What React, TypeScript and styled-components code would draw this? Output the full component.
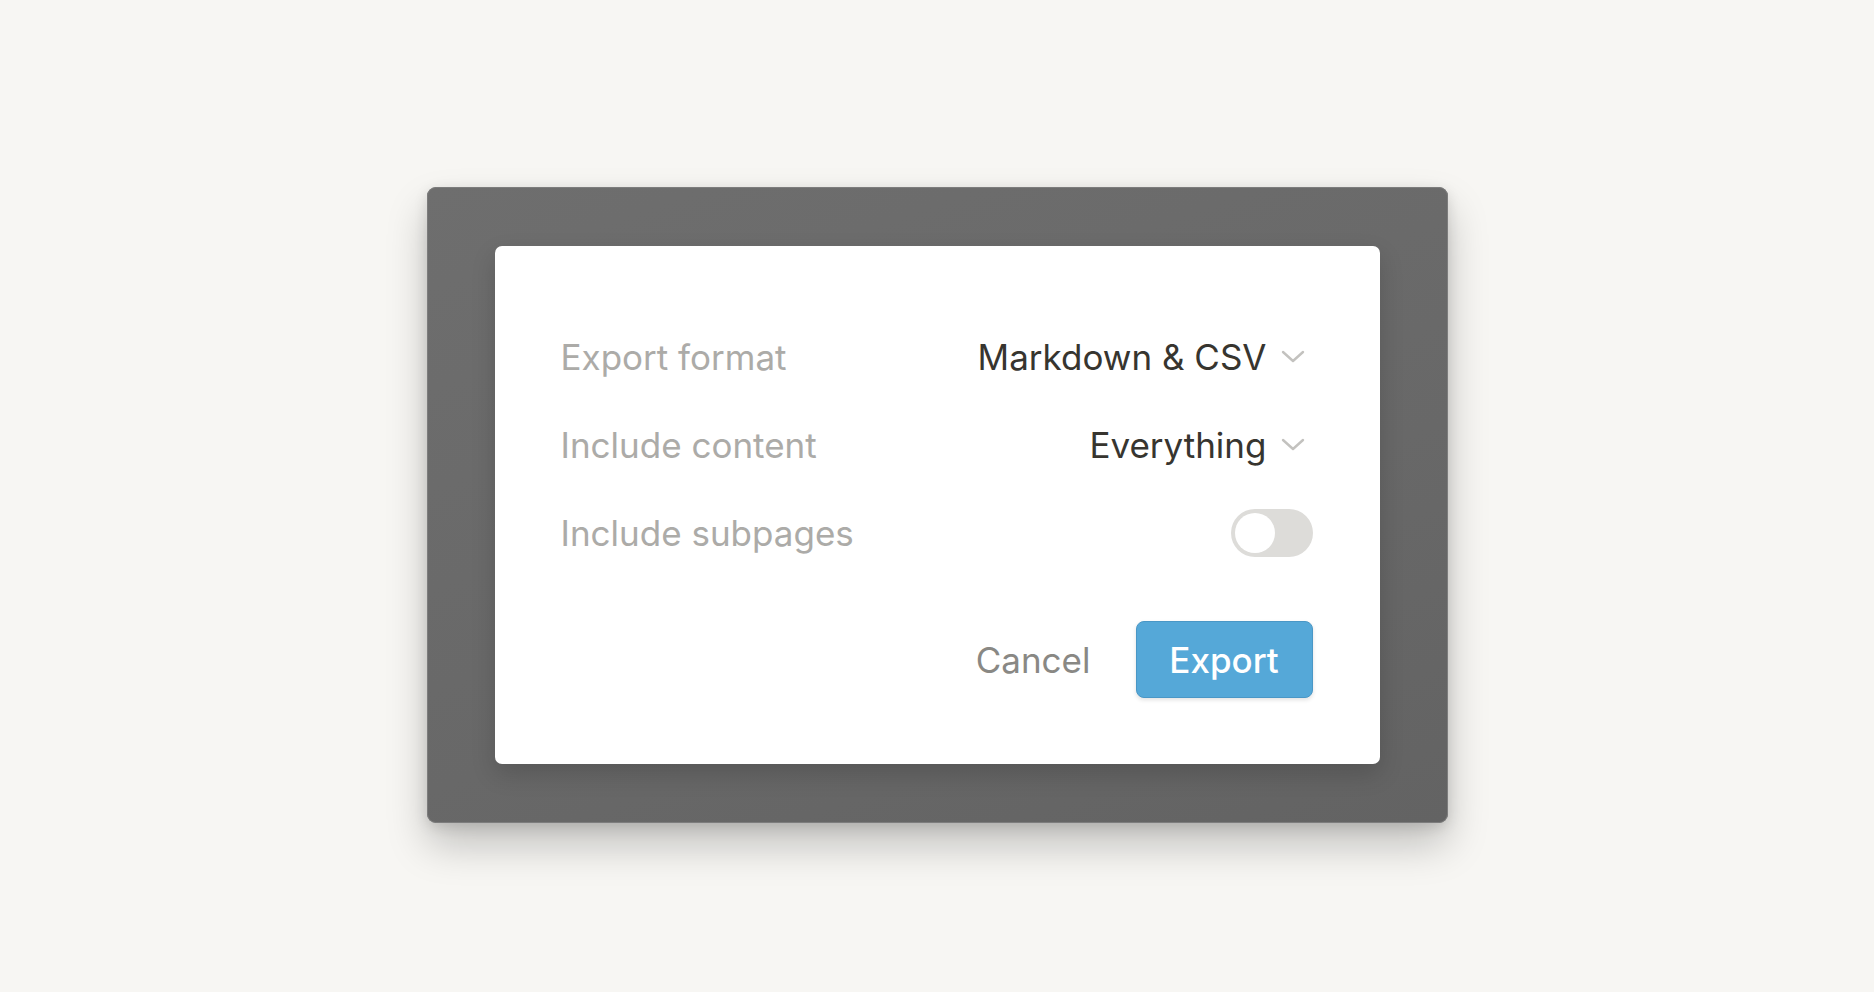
import { useState } from 'react'
import styled, { createGlobalStyle } from 'styled-components'

const GlobalStyle = createGlobalStyle`
  * {
    box-sizing: border-box;
  }
  html, body {
    margin: 0;
    padding: 0;
    background-color: #f7f6f3;
    font-family: Inter, "Liberation Sans", Arial, sans-serif;
  }
`

const Page = styled.div`
  min-height: 100vh;
  padding-top: 18px;
  display: flex;
  justify-content: center;
  align-items: center;
  background-color: #f7f6f3;
`

const Overlay = styled.div`
  padding: 59px 68px;
  border-radius: 9px;
  background: linear-gradient(160deg, #6e6e6e 0%, #686868 60%, #636363 100%);
  box-shadow: inset 0 0 0 1px #7d7d7d, 0 22px 40px rgba(0, 0, 0, 0.22), 0 4px 14px rgba(0, 0, 0, 0.12);
`

const Dialog = styled.div`
  width: 885px;
  padding: 67px 67px 66px 66px;
  border-radius: 7px;
  background-color: white;
  box-shadow: 0 10px 24px rgba(0, 0, 0, 0.16);
  display: flex;
  flex-direction: column;
`

const Row = styled.div`
  height: 88px;
  display: flex;
  justify-content: space-between;
  align-items: center;
`

const Label = styled.span`
  font-size: 35px;
  color: #acaba8;
`

const Select = styled.button`
  display: flex;
  align-items: center;
  gap: 14px;
  padding: 0 8px 0 0;
  border: none;
  background: none;
  cursor: pointer;
  font-family: inherit;
`

const SelectValue = styled.span`
  font-size: 35px;
  color: #37352f;
`

const Chevron = () => (
  <svg width="24" height="14" viewBox="0 0 24 14" fill="none">
    <path d="M2 2 L12 11 L22 2" stroke="#c3c2bf" strokeWidth="2.4" strokeLinecap="round" strokeLinejoin="round" />
  </svg>
)

const Track = styled.button<{ $on: boolean }>`
  width: 82px;
  height: 48px;
  padding: 4px;
  border: none;
  border-radius: 24px;
  background-color: ${(p) => (p.$on ? '#55a8d8' : '#dddcd9')};
  display: flex;
  justify-content: ${(p) => (p.$on ? 'flex-end' : 'flex-start')};
  align-items: center;
  cursor: pointer;
`

const Knob = styled.span`
  width: 40px;
  height: 40px;
  border-radius: 50%;
  background-color: white;
`

const Footer = styled.div`
  margin-top: 44px;
  display: flex;
  justify-content: flex-end;
  align-items: center;
  gap: 45px;
`

const CancelButton = styled.button`
  padding: 0;
  border: none;
  background: none;
  font-family: inherit;
  font-size: 35px;
  color: #898884;
  cursor: pointer;
`

const ExportButton = styled.button`
  width: 177px;
  height: 77px;
  border: 1px solid #4a97c6;
  border-radius: 8px;
  background-color: #55a8d8;
  box-shadow: 0 2px 4px rgba(15, 15, 15, 0.12);
  color: white;
  font-family: inherit;
  font-size: 35px;
  font-weight: 500;
  cursor: pointer;
`

const App = () => {
  const [subpages, setSubpages] = useState(false)

  return (
    <>
      <GlobalStyle />
      <Page>
        <Overlay>
          <Dialog>
            <Row>
              <Label>Export format</Label>
              <Select>
                <SelectValue>Markdown &amp; CSV</SelectValue>
                <Chevron />
              </Select>
            </Row>
            <Row>
              <Label>Include content</Label>
              <Select>
                <SelectValue>Everything</SelectValue>
                <Chevron />
              </Select>
            </Row>
            <Row>
              <Label>Include subpages</Label>
              <Track $on={subpages} onClick={() => setSubpages(!subpages)}>
                <Knob />
              </Track>
            </Row>
            <Footer>
              <CancelButton>Cancel</CancelButton>
              <ExportButton>Export</ExportButton>
            </Footer>
          </Dialog>
        </Overlay>
      </Page>
    </>
  )
}

export default App
